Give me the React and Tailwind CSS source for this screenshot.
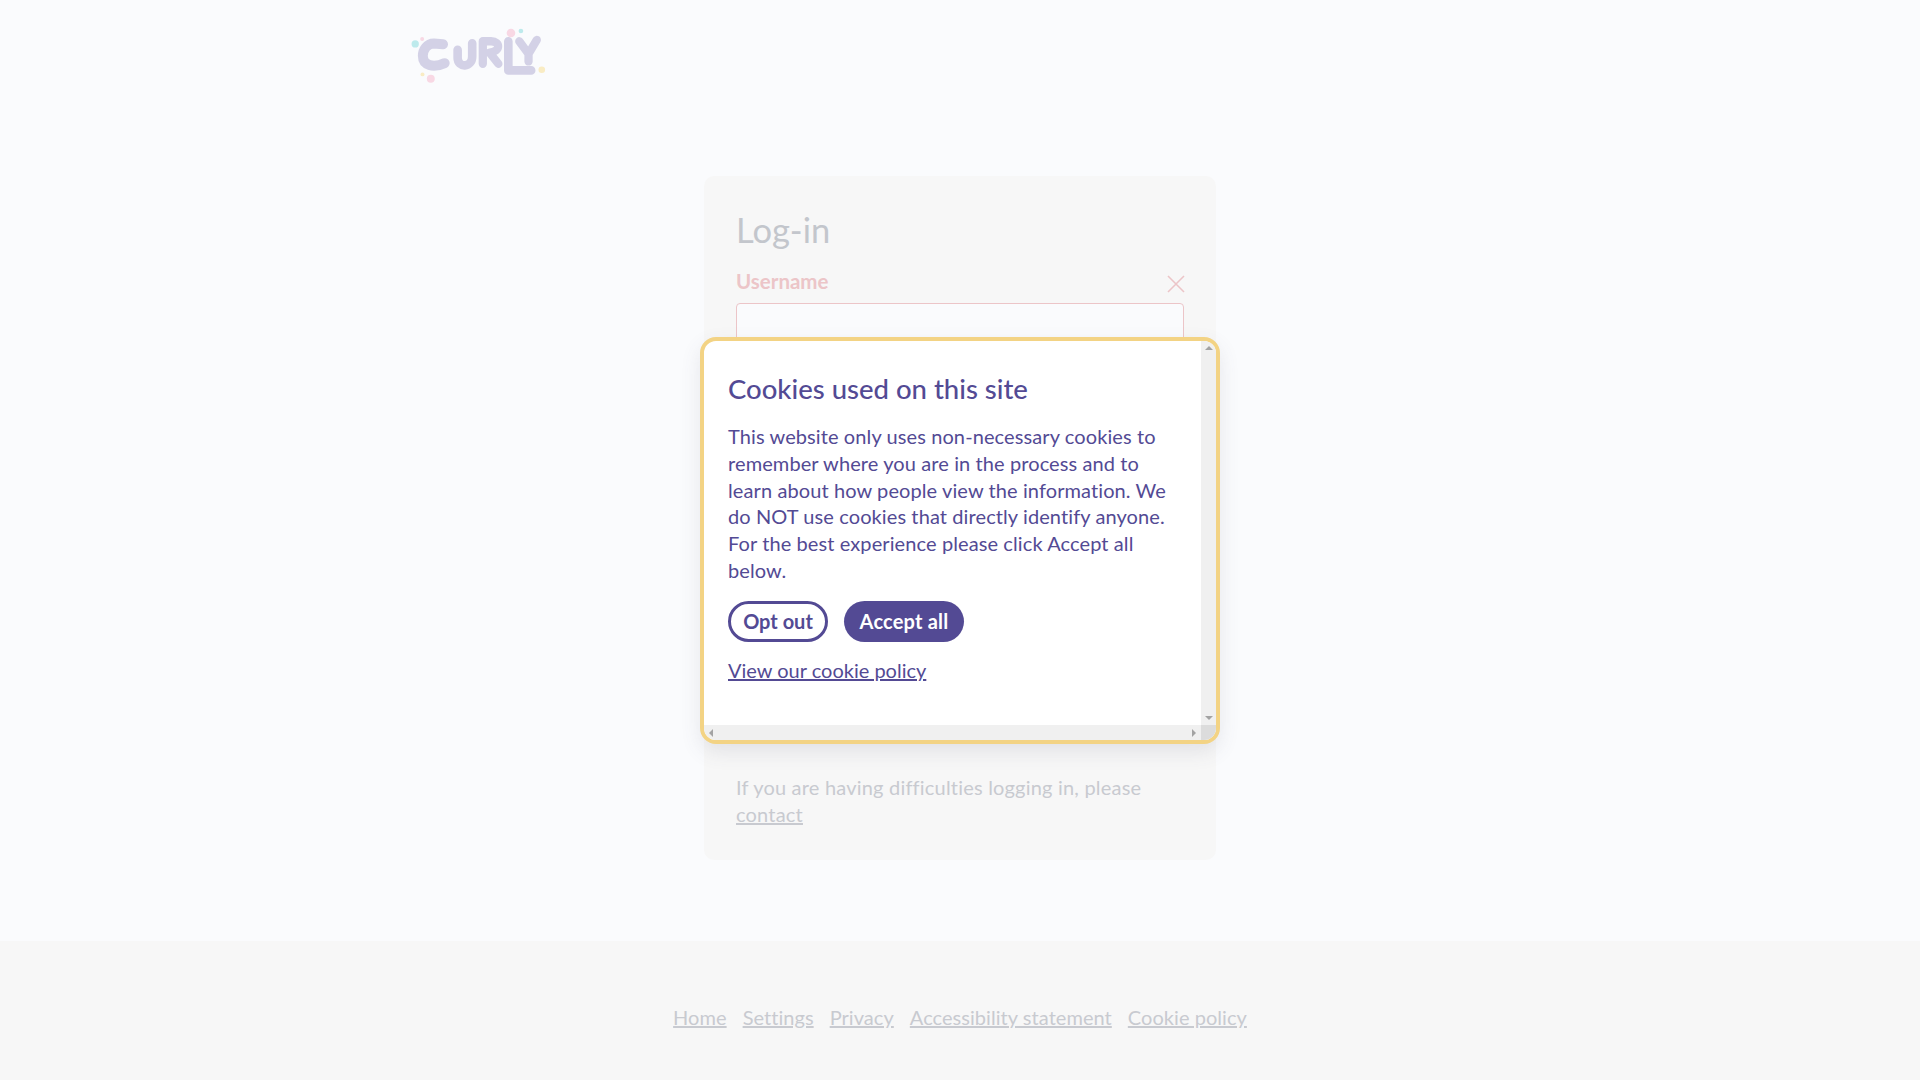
const footerLinks = ['Home', 'Settings', 'Privacy', 'Accessibility statement', 'Cookie policy'];

const Logo = () => (
  <svg viewBox="60 84 410 166" className="h-[55px] w-[137px]" fill="none">
    <g stroke="#d3d1e6" strokeLinecap="round" strokeLinejoin="round">
      <path d="M158 133 L130 131 C110 131 97 150 97 168 C97 197 128 206 163 190" strokeWidth="30" />
      <path d="M202 150 L202 174 C202 206 246 204 246 170 L246 130" strokeWidth="26" />
      <path d="M278 192 L278 124 L303 124 C332 124 332 156 298 158 L325 192" strokeWidth="25" />
      <path d="M355 124 L355 212 L424 212" strokeWidth="26" />
      <path d="M388 124 L416 162 L441 120 M416 162 L416 185" strokeWidth="25" />
    </g>
    <circle cx="74" cy="132" r="11" fill="#bdeaec" />
    <circle cx="95" cy="117" r="6" fill="#f8d8e4" />
    <circle cx="96" cy="224" r="6" fill="#f9ecc4" />
    <circle cx="121" cy="237" r="12" fill="#f8d8e4" />
    <circle cx="363" cy="99" r="13" fill="#f8d8e4" />
    <circle cx="393" cy="93" r="7" fill="#bdeaec" />
    <circle cx="456" cy="210" r="10" fill="#f9ecc4" />
  </svg>
);

const CookieModal = () => (
  <div className="absolute left-[700px] top-[337px] flex h-[407px] w-[520px] flex-col overflow-hidden rounded-[16px] border-4 border-[#f3d384] bg-white shadow-[0_8px_20px_rgba(80,80,110,0.12)]">
    <div className="flex min-h-0 flex-1">
      <div className="flex-1 px-6 pt-[31px] text-[20px] leading-[26.8px] text-[#534a94]">
        <h2 className="text-[27.5px] font-medium leading-[34px]">Cookies used on this site</h2>
        <p className="mt-[17px] tracking-[0.1px]">
          This website only uses non-necessary cookies to remember where you are in the process and to learn about how people view the information. We do NOT use cookies that directly identify anyone. For the best experience please click Accept all below.
        </p>
        <div className="mt-[17px] flex gap-4">
          <button className="h-[41px] w-[100px] rounded-full border-[3px] border-[#534a94] font-bold">Opt out</button>
          <button className="h-[41px] w-[120px] rounded-full bg-[#534a94] font-bold tracking-[0.2px] text-white">Accept all</button>
        </div>
        <a href="#" className="mt-[15px] inline-block underline">View our cookie policy</a>
      </div>
      <div className="flex w-[15px] flex-col items-center justify-between bg-[#f0f0f0] py-[5px]">
        <div className="h-0 w-0 border-x-[4px] border-b-[4px] border-x-transparent border-b-[#a3a3a3]" />
        <div className="h-0 w-0 border-x-[4px] border-t-[4px] border-x-transparent border-t-[#a3a3a3]" />
      </div>
    </div>
    <div className="flex h-[15px] bg-[#f0f0f0]">
      <div className="flex flex-1 items-center justify-between px-[5px]">
        <div className="h-0 w-0 border-y-[4px] border-r-[4px] border-y-transparent border-r-[#a3a3a3]" />
        <div className="h-0 w-0 border-y-[4px] border-l-[4px] border-y-transparent border-l-[#a3a3a3]" />
      </div>
      <div className="w-[15px] bg-[#dcdcdc]" />
    </div>
  </div>
);

export default function App() {
  return (
    <div className="relative flex h-[1080px] flex-col overflow-hidden bg-[#fafbfd] font-['Lato',sans-serif]">
      <header className="mx-auto w-[1100px] pt-[28px]">
        <Logo />
      </header>

      <main className="mx-auto mt-[93px] flex h-[684px] w-[512px] flex-col rounded-[10px] bg-[#f7f7f7] px-8 pt-[26px] pb-[32px]">
        <h1 className="text-[34.5px] leading-[56px] text-[#c3c6cc]">Log-in</h1>
        <div className="mt-[10px] flex items-start justify-between">
          <label className="text-[20.5px] font-bold leading-[27px] text-[#ecc5c8]">Username</label>
          <svg viewBox="0 0 18 18" className="mr-[-1px] mt-[7px] h-[18px] w-[18px]" fill="none" stroke="#ecc5c8" strokeWidth="1.6">
            <path d="M1 1 L17 17 M17 1 L1 17" />
          </svg>
        </div>
        <input className="mt-[8px] h-[48px] w-full rounded-[4px] border border-[#ecc5c8] bg-[#fafbfd]" />
        <p className="mt-auto text-[20px] leading-[27px] tracking-[0.2px] text-[#c8cad0]">
          If you are having difficulties logging in, please <a href="#" className="underline">contact</a>
        </p>
      </main>

      <footer className="mt-auto flex h-[139px] items-center justify-center gap-4 bg-[#f7f7f7] pt-[13px]">
        {footerLinks.map((link) => (
          <a key={link} href="#" className="text-[20px] tracking-[0.05px] text-[#c8cad0] underline">{link}</a>
        ))}
      </footer>

      <CookieModal />
    </div>
  );
}
